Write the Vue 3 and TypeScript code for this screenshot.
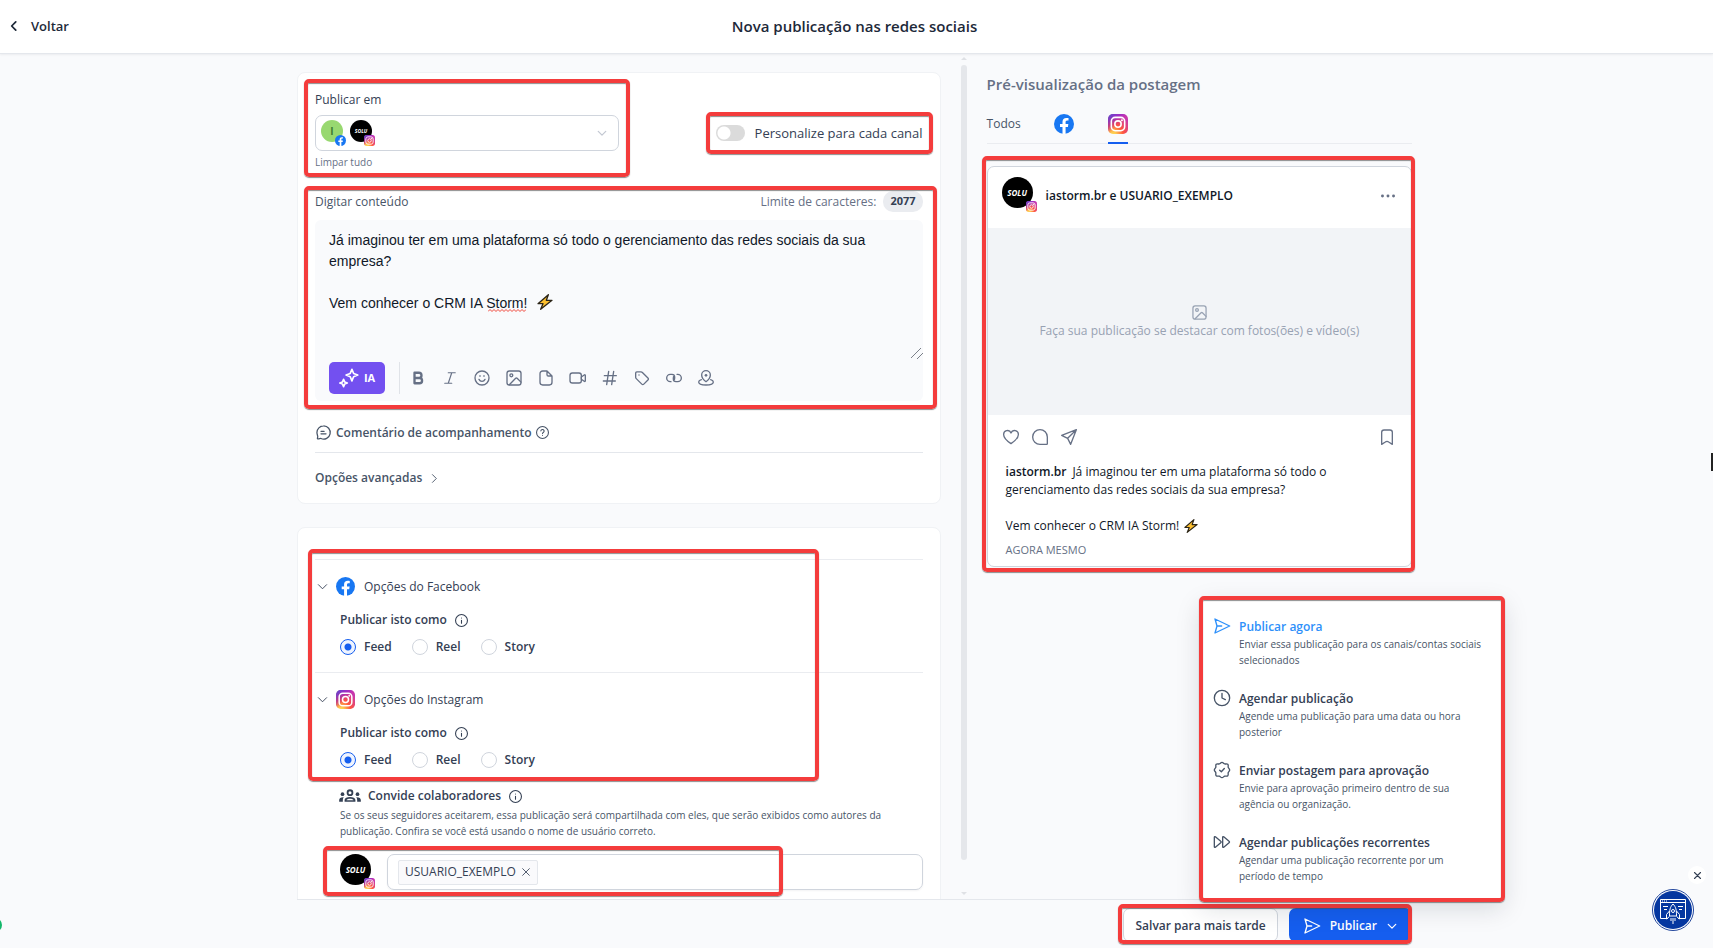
<script setup lang="ts">
import { h, ref, type FunctionalComponent } from 'vue'

const glyphs: Record<string, string> = {
  back: '<path d="M15 5l-7 7 7 7"/>',
  right: '<path d="M7.500 3.500L16 12l-8.500 8.500"/>',
  down: '<path d="M3 8l9 9 9-9"/>',
  close: '<path d="M4 4l16 16M20 4L4 20"/>',
  bold: '<path d="M6 3h7.500a4.500 4.500 0 0 1 0 9H6zM6 12h8.500a4.500 4.500 0 0 1 0 9H6z"/>',
  italic: '<path d="M9 3h12M3 21h12M15 3L9 21"/>',
  smile: '<circle cx="12" cy="12" r="10.500"/><path d="M7.500 14s1.500 3 4.500 3 4.500-3 4.500-3M9 8.500v1M15 8.500v1"/>',
  image: '<rect x="1.500" y="1.500" width="21" height="21" rx="3.500"/><circle cx="8" cy="8" r="2.200"/><path d="M5 22l9.500-9.500c.8-.8 1.400-.8 2.200 0l5.800 5.700"/>',
  file: '<path d="M13.500 1.500H7a4 4 0 0 0-4 4v13a4 4 0 0 0 4 4h10a4 4 0 0 0 4-4V9zM13.500 1.500V7a2 2 0 0 0 2 2H21"/>',
  video: '<rect x="0" y="4.500" width="17" height="15" rx="3.500"/><path d="M17 10.500l4.300-3c1-.7 1.700-.3 1.700.7v8c0 1-.7 1.400-1.700.7l-4.300-3z"/>',
  hash: '<path d="M3.500 8.500h18M2 16.500h18M10 2L7 22M17.500 2l-3 20"/>',
  tag: '<path d="M2.500 4.500v6.300c0 .9.300 1.500.9 2.100l8.300 8.300c1 1 2 1 3 0l6.200-6.200c1-1 1-2 0-3l-8.300-8.300c-.6-.6-1.200-.9-2.100-.9H4.200c-1 0-1.700.7-1.700 1.700z"/><path d="M7.500 7.500h.01"/>',
  link: '<path d="M7.500 17.500h-1a5.500 5.500 0 0 1 0-11H9a4 4 0 0 1 4 4V12a4 4 0 0 1-1.500 3.500M16.500 6.500h1a5.500 5.500 0 0 1 0 11H15a4 4 0 0 1-4-4V12a4 4 0 0 1 1.500-3.500"/>',
  place: '<path d="M12 17.500s-6.500-4.700-6.500-10a6.500 6.500 0 0 1 13 0c0 5.300-6.500 10-6.500 10z"/><path d="M12 8h.01" stroke-width="4"/><path d="M5 14.500c-2.400.7-4 1.800-4 3.500 0 2.500 4.900 4.500 11 4.500s11-2 11-4.500c0-1.700-1.600-2.800-4-3.500"/>',
  comment: '<path d="M12 1.500a10.500 10.500 0 1 1-4 20.100c-.7-.3-3.800.9-5.300.6-.8-.2-.6-1 .1-2.900.4-1-1.300-4.600-1.300-7.300A10.500 10.500 0 0 1 12 1.500zM8 10h5M8 14h8"/>',
  help: '<circle cx="12" cy="12" r="11"/><path d="M9 9a3 3 0 0 1 6 .8c0 2.200-3 2.200-3 4.200M12 17.500h.01"/>',
  info: '<circle cx="12" cy="12" r="11"/><path d="M12 11.500v5.500M12 7.500h.01"/>',
  heart: '<path d="M12 22C7 18.500 1 14 1 8.500A5.700 5.700 0 0 1 12 6a5.700 5.700 0 0 1 11 2.500C23 14 17 18.500 12 22z"/>',
  bubble: '<path d="M23 12v10c0 .6-.4 1-1 1H12a11 11 0 1 1 11-11z"/>',
  plane: '<path d="M23 1L1 9.500l9 4.500 4.500 9zM23 1L10 14"/>',
  bookmark: '<path d="M4 5a3.500 3.500 0 0 1 3.500-3.500h9A3.500 3.500 0 0 1 20 5v18l-5.500-3.500a4 4 0 0 0-5 0L4 23z"/>',
  send: '<path d="M1.500 1.500L23.500 12 1.500 22.500 4.500 12zM4.500 12h7"/>',
  clock: '<circle cx="12" cy="12" r="11.500"/><path d="M12 5V12l5 2.500"/>',
  approve: '<path d="M12 .5c1.900 0 2.500 2 4.100 2.400s3.300-.6 4.600.6.200 3 .6 4.500 2.200 2.100 2.200 4-1.800 2.500-2.200 4 .6 3.300-.6 4.600-3 .2-4.600.6-2.200 2.300-4.100 2.300-2.500-1.900-4.100-2.300-3.300.6-4.600-.6-.2-3-.6-4.600-2.200-2.100-2.200-4 1.800-2.500 2.200-4-.6-3.300.6-4.500 3-.2 4.600-.6S10.100.5 12 .5z"/><path d="M8.500 12.300l2.500 2.400 4.500-5"/>',
  forward: '<path d="M.5 5c0-1 .8-1.400 1.600-.8l8 6.800c.8.600.8 1.400 0 2l-8 6.800c-.8.600-1.600.2-1.600-.8zM13 5c0-1 .8-1.400 1.600-.8l8 6.800c.8.600.8 1.400 0 2l-8 6.800c-.8.600-1.600.2-1.600-.8z"/>',
  dots: '<g fill="currentColor" stroke="none"><circle cx="2.500" cy="12" r="2.500"/><circle cx="12" cy="12" r="2.500"/><circle cx="21.500" cy="12" r="2.500"/></g>',
  sparkle: '<path d="M15.500 1.500l2 5 5 2-5 2-2 5-2-5-5-2 5-2zM5.500 13.500l1.300 3.200 3.200 1.300-3.200 1.300-1.300 3.200-1.300-3.200L1 18l3.200-1.300z"/>',
  group: '<g fill="currentColor" stroke="none"><path fill-rule="evenodd" d="M12 4a4 4 0 1 1 0 8 4 4 0 0 1 0-8zm0 2.200a1.800 1.800 0 1 0 0 3.600 1.800 1.800 0 0 0 0-3.600zM5.500 19v-2.200c0-2.300 3-3.500 6.500-3.500s6.500 1.200 6.500 3.500V19zm2.300-2h8.400c-.3-.9-2-1.600-4.200-1.600s-3.900.7-4.200 1.600z"/><circle cx="3" cy="9.800" r="2.200"/><circle cx="21" cy="9.800" r="2.200"/><path d="M-1 19v-2c0-2.300 2-3.700 5.500-3.500-.8.900-1.100 2-1.100 3.300V19zM25 19v-2c0-2.300-2-3.700-5.500-3.500.8.900 1.100 2 1.100 3.300V19z"/></g>',
  bolt: '<path d="M17 1L1.500 14.500H9L5.500 23 22.500 9.500H14z" fill="#fdc02f" stroke="#2b2417" stroke-width="2"/>',
}

const Icon: FunctionalComponent<{ name: string; size?: number; weight?: number }> = (p) =>
  h('svg', {
    class: 'icon',
    viewBox: '0 0 24 24',
    width: p.size ?? 18,
    height: p.size ?? 18,
    fill: 'none',
    stroke: 'currentColor',
    'stroke-width': p.weight ?? 2,
    'stroke-linecap': 'round',
    'stroke-linejoin': 'round',
    overflow: 'visible',
    'aria-hidden': 'true',
    innerHTML: glyphs[p.name],
  })
Icon.props = ['name', 'size', 'weight']

const brandArt: Record<string, string> = {
  facebook:
    '<circle cx="12" cy="12" r="12" fill="#1877f2"/><path fill="#fff" d="M16.700 15.500l.5-3.500h-3.300V9.700c0-1 .5-1.900 2-1.900h1.500V4.900s-1.400-.2-2.700-.2c-2.700 0-4.500 1.600-4.500 4.600V12h-3v3.500h3V24h3.700v-8.500z"/>',
  instagram:
    '<rect width="24" height="24" rx="6" fill="url(#ig-base)"/><rect width="24" height="24" rx="6" fill="url(#ig-top)"/><g fill="none" stroke="#fff" stroke-width="1.900"><rect x="4" y="4" width="16" height="16" rx="4.600"/><circle cx="12" cy="12" r="3.800"/></g><circle cx="16.700" cy="7.400" r="1.200" fill="#fff"/>',
}

const Brand: FunctionalComponent<{ name: string; size: number }> = (p) =>
  h('svg', {
    class: 'brand',
    viewBox: '0 0 24 24',
    width: p.size,
    height: p.size,
    'aria-hidden': 'true',
    innerHTML: brandArt[p.name],
  })
Brand.props = ['name', 'size']

const content = ref(
  'Já imaginou ter em uma plataforma só todo o gerenciamento das redes sociais da sua empresa?\n\nVem conhecer o CRM IA Storm! ⚡',
)
const perChannel = ref(false)

const tools = [
  ['bold', 'Negrito'],
  ['italic', 'Itálico'],
  ['smile', 'Emoji'],
  ['image', 'Imagem'],
  ['file', 'Arquivo'],
  ['video', 'Vídeo'],
  ['hash', 'Hashtag'],
  ['tag', 'Etiqueta'],
  ['link', 'Link'],
  ['place', 'Localização'],
]

const networks = ref([
  { id: 'facebook', title: 'Opções do Facebook', kind: 'Feed' },
  { id: 'instagram', title: 'Opções do Instagram', kind: 'Feed' },
])
const kinds = ['Feed', 'Reel', 'Story']

const actions = [
  { icon: 'send', title: 'Publicar agora', text: 'Enviar essa publicação para os canais/contas sociais selecionados', active: true },
  { icon: 'clock', title: 'Agendar publicação', text: 'Agende uma publicação para uma data ou hora posterior' },
  { icon: 'approve', title: 'Enviar postagem para aprovação', text: 'Envie para aprovação primeiro dentro de sua agência ou organização.' },
  { icon: 'forward', title: 'Agendar publicações recorrentes', text: 'Agendar uma publicação recorrente por um período de tempo' },
]
</script>

<template>
  <div class="app">
    <svg class="defs" width="0" height="0" aria-hidden="true">
      <defs>
        <radialGradient id="ig-base" cx=".27" cy="1.05" r="1">
          <stop offset="0" stop-color="#fd5" />
          <stop offset=".15" stop-color="#fdc94f" />
          <stop offset=".5" stop-color="#ff543e" />
          <stop offset="1" stop-color="#c837ab" />
        </radialGradient>
        <linearGradient id="ig-top" x1="0" y1="0" x2=".5" y2=".5">
          <stop offset="0" stop-color="#3771c8" />
          <stop offset=".25" stop-color="#6040d0" stop-opacity=".8" />
          <stop offset="1" stop-color="#60f" stop-opacity="0" />
        </linearGradient>
      </defs>
    </svg>

    <header class="topbar">
      <button class="back" type="button"><Icon name="back" :size="14" :weight="3" />Voltar</button>
      <h1>Nova publicação nas redes sociais</h1>
    </header>

    <main class="main">
      <section class="composer">
        <div class="card">
          <div class="row-top">
            <div class="channels marked mark-channels">
              <span id="channels-label" class="label">Publicar em</span>
              <button class="picker" type="button" aria-labelledby="channels-label">
                <span class="avatar small green">I<Brand name="facebook" :size="11" /></span>
                <span class="avatar small black"><i>SOLU</i><Brand name="instagram" :size="11" /></span>
                <Icon class="picker-caret" name="down" :size="10" :weight="3" />
              </button>
              <button class="clear" type="button">Limpar tudo</button>
            </div>
            <label class="toggle marked mark-toggle">
              <input v-model="perChannel" type="checkbox" role="switch" />
              Personalize para cada canal
            </label>
          </div>

          <div class="editor marked mark-editor">
            <div class="editor-head">
              <label class="label soft" for="content">Digitar conteúdo</label>
              <span class="limit">Limite de caracteres: <b>2077</b></span>
            </div>
            <div class="panel">
              <div class="field">
                <textarea id="content" v-model="content" spellcheck="false"></textarea>
                <svg class="squiggle" viewBox="0 0 38 3" width="38" height="3" aria-hidden="true">
                  <path d="M0 2.500l2-2 2 2 2-2 2 2 2-2 2 2 2-2 2 2 2-2 2 2 2-2 2 2 2-2 2 2 2-2 2 2 2-2 2 2 2-2" fill="none" stroke="#f04438" />
                </svg>
                <span class="bolt"><Icon name="bolt" :size="16" /></span>
                <svg class="grip" viewBox="0 0 12 12" width="12" height="12" aria-hidden="true">
                  <path d="M0 11L10 1M6 12l6-6" fill="none" stroke="#7b8089" />
                </svg>
              </div>
              <div class="toolbar">
                <button class="ai" type="button"><Icon name="sparkle" :size="20" :weight="2" />IA</button>
                <div class="tools">
                  <button v-for="[name, label] in tools" :key="name" type="button" :aria-label="label">
                    <Icon :name="name" :size="name === 'bold' || name === 'italic' ? 14 : 16" :weight="name === 'bold' ? 4 : 2" />
                  </button>
                </div>
              </div>
            </div>
          </div>

          <button class="comment" type="button">
            <Icon name="comment" :size="15" />Comentário de acompanhamento<Icon name="help" :size="13" />
          </button>
          <button class="advanced" type="button">Opções avançadas<Icon name="right" :size="11" /></button>
        </div>

        <div class="card second">
          <div class="networks marked mark-networks">
            <section v-for="n in networks" :key="n.id" class="network">
              <button class="network-head" type="button">
                <Icon name="down" :size="11" /><Brand :name="n.id" :size="19" />{{ n.title }}
              </button>
              <fieldset>
                <legend>Publicar isto como <Icon name="info" :size="13" /></legend>
                <label v-for="k in kinds" :key="k">
                  <input v-model="n.kind" type="radio" :name="n.id" :value="k" />{{ k }}
                </label>
              </fieldset>
            </section>
          </div>
          <div class="invite">
            <h3><Icon name="group" :size="20" />Convide colaboradores<Icon name="info" :size="13" /></h3>
            <p>
              Se os seus seguidores aceitarem, essa publicação será compartilhada com eles, que serão exibidos como
              autores da publicação. Confira se você está usando o nome de usuário correto.
            </p>
            <div class="invite-row marked mark-invite">
              <span class="avatar black"><i>SOLU</i><Brand name="instagram" :size="11" /></span>
              <div class="people">
                <span class="chip">USUARIO_EXEMPLO
                  <button type="button" aria-label="Remover"><Icon name="close" :size="10" /></button>
                </span>
                <input type="text" aria-label="Convide colaboradores" />
              </div>
            </div>
          </div>
        </div>
      </section>

      <div class="scroll" aria-hidden="true"><span class="up"></span><span class="thumb"></span><span class="dn"></span></div>

      <section class="preview">
        <h2>Pré-visualização da postagem</h2>
        <nav class="tabs">
          <button type="button">Todos</button>
          <button type="button" aria-label="Facebook"><Brand name="facebook" :size="20" /></button>
          <button type="button" class="on" aria-label="Instagram"><Brand name="instagram" :size="20" /></button>
        </nav>
        <article class="post marked mark-post">
          <header>
            <span class="avatar black"><i>SOLU</i><Brand name="instagram" :size="11" /></span>
            <strong>iastorm.br e USUARIO_EXEMPLO</strong>
            <Icon class="push" name="dots" :size="14" />
          </header>
          <div class="media"><Icon name="image" :size="15" />Faça sua publicação se destacar com fotos(ões) e vídeo(s)</div>
          <div class="reactions">
            <Icon name="heart" :size="16" /><Icon name="bubble" :size="16" /><Icon name="plane" :size="16" />
            <Icon class="push" name="bookmark" :size="16" />
          </div>
          <div class="caption">
            <p><b>iastorm.br</b>Já imaginou ter em uma plataforma só todo o gerenciamento das redes sociais da sua empresa?</p>
            <p>Vem conhecer o CRM IA Storm! <Icon name="bolt" :size="14" /></p>
            <small>AGORA MESMO</small>
          </div>
        </article>
      </section>
    </main>

    <footer class="footer">
      <div class="footer-inner">
        <div class="submit marked mark-submit">
          <button class="save" type="button">Salvar para mais tarde</button>
          <button class="publish" type="button"><Icon name="send" :size="16" />Publicar<Icon name="down" :size="10" :weight="3" /></button>
        </div>
        <div class="menu marked mark-menu">
          <button v-for="a in actions" :key="a.title" type="button" :class="{ active: a.active }">
            <Icon :name="a.icon" :size="16" />
            <span><strong>{{ a.title }}</strong>{{ a.text }}</span>
          </button>
        </div>
      </div>
    </footer>

    <button class="widget-close" type="button" aria-label="Fechar"><Icon name="close" :size="9" :weight="3" /></button>
    <button class="widget" type="button" aria-label="Ajuda">
      <svg viewBox="0 0 44 44" width="44" height="44" fill="none" stroke="#fff" aria-hidden="true">
        <circle cx="22" cy="22" r="20.500" fill="#fff" stroke="#23479d" />
        <circle cx="22" cy="22" r="19" fill="#0537a0" stroke="none" />
        <path d="M17 30.500H9.500v-19h25v19H27M9.500 14.500h25M11 13h1M13 13h1M15 13h1M12 18.500h5M13 21.500h3M27 18.500h5M28 21.500h3" />
        <path d="M22 16c-3 3-3.500 6-3.500 12h7c0-6-.5-9-3.500-12zM18.500 23l-3 3.500V31l3-2.500M25.500 23l3 3.500V31l-3-2.500M20 30v3M22 30v6M24 30v3" fill="#0537a0" />
        <circle cx="22" cy="23" r="1.500" />
      </svg>
    </button>
    <span class="edge-dot"></span>
    <span class="edge-bar"></span>
  </div>
</template>

<style>
body {
  margin: 0;
}
</style>

<style scoped>
.app {
  position: relative;
  display: grid;
  grid-template-rows: 54px minmax(0, 1fr) 49px;
  height: 100vh;
  overflow: hidden;
  background: #f9fafc;
  color: #344054;
  font: 12px/18px "Open Sans", "Noto Sans", sans-serif;
}
.app :deep(.icon),
.app :deep(.brand) {
  flex: none;
}
.defs {
  position: absolute;
}
button {
  display: flex;
  align-items: center;
  padding: 0;
  border: 0;
  background: none;
  color: inherit;
  font: inherit;
  text-align: left;
}
h1, h2, h3, p {
  margin: 0;
}
.marked {
  position: relative;
}
.marked::after {
  content: "";
  position: absolute;
  border: 4px solid #f43c3c;
  border-radius: 5px;
  box-shadow: 0 1px 1px #555a, inset 0 1px 1px #555a;
  pointer-events: none;
}
.push {
  margin-left: auto;
}

.topbar {
  z-index: 1;
  display: grid;
  grid-template-columns: 1fr auto 1fr;
  align-items: center;
  padding: 0 11px 2px 7px;
  border-bottom: 1px solid #e4e7ec;
  background: #fff;
  box-shadow: 0 1px 2px #1018280f;
  box-sizing: border-box;
  color: #1d2939;
}
.back {
  gap: 10px;
  font-size: 13px;
  font-weight: 600;
}
h1 {
  font-size: 15px;
  font-weight: 600;
}

.main,
.footer-inner {
  width: 100%;
  max-width: 1119px;
  box-sizing: border-box;
  margin: 0 auto;
  padding-right: 4px;
}
.main {
  display: grid;
  grid-template-columns: minmax(0, 643fr) 6px minmax(0, 425fr);
  column-gap: 20px;
}
.composer {
  min-height: 0;
  padding-top: 18px;
  overflow: hidden;
}
.card {
  padding: 17px 17px 0;
  border: 1px solid #f0f2f5;
  border-radius: 8px;
  background: #fff;
}
.card.second {
  margin-top: 23px;
  padding-top: 31px;
}
.row-top {
  display: flex;
  justify-content: space-between;
}
.channels {
  display: flex;
  flex-direction: column;
  align-items: stretch;
  width: 50%;
}
.label {
  padding-top: 1px;
}
.mark-channels::after {
  inset: -11px -11px -6px -11px;
}
.picker {
  gap: 7px;
  height: 36px;
  margin: 6px 0 2px;
  padding: 0 11px 0 5px;
  border: 1px solid #d0d5dd;
  border-radius: 7px;
  box-sizing: border-box;
}
.picker-caret {
  margin-left: auto;
  color: #c3c8d2;
}
.avatar {
  position: relative;
  display: flex;
  flex: none;
  align-items: center;
  justify-content: center;
  width: 31px;
  height: 31px;
  border-radius: 50%;
  color: #fff;
  font-size: 8px;
}
.avatar i {
  font-weight: 700;
}
.avatar.small {
  width: 22px;
  height: 22px;
  margin-bottom: 4px;
  font-size: 5px;
}
.avatar :deep(.brand) {
  position: absolute;
  right: -4px;
  bottom: -4px;
}
.avatar.small :deep(.brand) {
  right: -3px;
}
.black {
  background: #000;
}
.avatar.green {
  background: #98d870;
  color: #3e7a30;
  font-size: 10px;
  font-weight: 700;
}
.clear {
  color: #667085;
  font-size: 10px;
}
.toggle {
  display: flex;
  align-items: center;
  align-self: flex-start;
  gap: 10px;
  margin-top: 34px;
  font-size: 13px;
}
.toggle input {
  appearance: none;
  width: 29px;
  height: 16px;
  margin: 0;
  border-radius: 8px;
  background: radial-gradient(circle at 8px 8px, #fff 6px, #0000 7px), #dbdbdb;
}
.mark-toggle::after {
  inset: -12px -10px;
}
.editor {
  margin-top: 20px;
}
.mark-editor::after {
  inset: -5px -14px -8px -11px;
}
.editor-head {
  display: flex;
  align-items: center;
  justify-content: space-between;
  height: 21px;
}
.soft {
  color: #475467;
}
.limit {
  display: flex;
  align-items: center;
  gap: 7px;
  color: #667085;
}
.limit b {
  padding: 1px 7px 2px;
  border-radius: 10px;
  background: #eaecf0;
  color: #344054;
  font-size: 11px;
}
.panel {
  margin-top: 8px;
  padding-bottom: 7px;
  border-radius: 6px;
  background: #f9fafc;
}
.field {
  position: relative;
  height: 142px;
}
textarea {
  display: block;
  width: 100%;
  height: 140px;
  padding: 10px 14px;
  border: 0;
  box-sizing: border-box;
  background: none;
  color: #101828;
  font: 14px/21px "Liberation Sans", Arial, sans-serif;
  outline: 0;
  resize: none;
  overflow: hidden;
}
.squiggle {
  position: absolute;
  left: 173px;
  top: 89px;
}
.bolt {
  position: absolute;
  left: 216px;
  top: 73px;
  display: flex;
  padding: 1px 4px 4px 6px;
  background: #f9fafc;
}
.grip {
  position: absolute;
  right: 0;
  bottom: 3px;
}
.toolbar {
  display: flex;
  align-items: center;
  height: 32px;
  padding-left: 14px;
}
.ai {
  justify-content: center;
  gap: 5px;
  width: 56px;
  height: 32px;
  border-radius: 5px;
  background: #7350f0;
  color: #fff;
  font-size: 11px;
  font-weight: 700;
}
.tools {
  display: flex;
  align-items: center;
  height: 32px;
  margin-left: 14px;
  padding-left: 2px;
  border-left: 1px solid #e0e3e8;
  color: #667085;
}
.tools button {
  justify-content: center;
  width: 32px;
  height: 32px;
}
.comment,
.advanced {
  width: 100%;
  color: #475467;
  font-weight: 600;
}
.comment {
  gap: 5px;
  height: 52px;
  padding: 12px 0 0 1px;
  border-bottom: 1px solid #e4e7ec;
}
.advanced {
  gap: 7px;
  height: 50px;
}

.mark-networks::after {
  inset: -10px 104px 4px -7px;
}
.network {
  height: 112px;
  border-top: 1px solid #eaecf0;
}
.network-head {
  gap: 8px;
  padding: 17px 0 0 2px;
}
.network-head :deep(.brand) {
  margin: 0 1px 0 0;
}
fieldset {
  display: flex;
  gap: 20px;
  margin: 15px 0 0 25px;
  padding: 0;
  border: 0;
  font-weight: 600;
}
legend {
  display: flex;
  align-items: center;
  gap: 8px;
  padding: 0;
  margin-bottom: 9px;
}
fieldset label {
  display: flex;
  align-items: center;
  gap: 8px;
}
input[type="radio"] {
  appearance: none;
  width: 16px;
  height: 16px;
  margin: 0;
  border: 1px solid #d0d5dd;
  border-radius: 50%;
}
input[type="radio"]:checked {
  border-color: #155eef;
  background: radial-gradient(circle, #155eef 3px, #eff4ff 4px);
}
.invite {
  padding: 1px 0 40px 25px;
}
.invite h3 {
  display: flex;
  align-items: center;
  gap: 8px;
  font-size: 12px;
  font-weight: 600;
}
.invite p {
  color: #475467;
  font-size: 10px;
  line-height: 16px;
  margin-top: 1px;
}
.invite-row {
  display: flex;
  align-items: flex-start;
  gap: 16px;
  margin-top: 15px;
}
.mark-invite::after {
  inset: -8px 140px -6px -17px;
}
.people {
  display: flex;
  flex: 1;
  align-items: center;
  min-width: 0;
  height: 36px;
  padding: 0 10px;
  border: 1px solid #d0d5dd;
  border-radius: 7px;
  box-shadow: 0 1px 2px #1018280d;
  box-sizing: border-box;
}
.people input {
  flex: 1;
  min-width: 0;
  border: 0;
  background: none;
  outline: 0;
}
.chip {
  display: flex;
  align-items: center;
  gap: 5px;
  height: 23px;
  padding: 0 6px;
  border: 1px solid #e4e7ec;
  border-radius: 2px;
  background: #fafafc;
}

.scroll {
  display: flex;
  flex-direction: column;
  align-items: center;
  padding: 3px 0 4px;
}
.thumb {
  flex: 1;
  width: 6px;
  margin: 5px 0 32px;
  border-radius: 3px;
  background: #e5e7eb;
}
.up,
.dn {
  border: 3px solid transparent;
}
.up {
  border-top: 0;
  border-bottom-color: #dfe1e5;
}
.dn {
  border-bottom: 0;
  border-top-color: #dfe1e5;
}

.preview {
  padding-top: 19px;
}
h2 {
  color: #667085;
  font-size: 15px;
  font-weight: 600;
  line-height: 22px;
}
.tabs {
  display: flex;
  gap: 33px;
  height: 38px;
  margin: 10px 0 22px;
  border-bottom: 1px solid #eaecf0;
}
.tabs button {
  height: 39px;
  box-sizing: border-box;
  border-bottom: 2px solid transparent;
  color: #475467;
}
.tabs .on {
  border-color: #155eef;
}
.tabs button + button + button {
  margin-left: 1px;
}
.post {
  border: 1px solid #d0d5dd;
  border-radius: 7px;
  background: #fff;
}
.mark-post::after {
  inset: -11px -4px -6px -6px;
}
.post header {
  display: flex;
  align-items: flex-start;
  gap: 13px;
  height: 61px;
  padding: 10px 16px 0 14px;
  box-sizing: border-box;
  color: #101828;
}
.post strong {
  margin-top: 10px;
  font-weight: 600;
}
.post header .push {
  margin-top: 12px;
  color: #667085;
}
.media {
  display: flex;
  flex-direction: column;
  align-items: center;
  justify-content: center;
  gap: 2px;
  height: 187px;
  padding-top: 2px;
  box-sizing: border-box;
  background: #f2f4f7;
  color: #98a2b3;
}
.reactions {
  display: flex;
  gap: 13px;
  padding: 14px 16px 0 15px;
  color: #667085;
}
.caption {
  padding: 18px 60px 7px 18px;
  color: #101828;
}
.caption b {
  margin-right: 6px;
  font-weight: 600;
}
.caption p {
  margin-bottom: 18px;
}
.caption p + p {
  margin-bottom: 6px;
}
.caption :deep(.icon) {
  margin-left: 2px;
  vertical-align: -3px;
}
.caption small {
  display: block;
  color: #667085;
  font-size: 11px;
}

.footer-inner {
  position: relative;
  display: flex;
  justify-content: flex-end;
  height: 49px;
  padding-top: 8px;
  border-top: 1px solid #e4e7ec;
}
.submit {
  display: flex;
  gap: 11px;
  height: 34px;
}
.mark-submit::after {
  inset: -4px 0 -2px -5px;
}
.save,
.publish {
  height: 34px;
  box-sizing: border-box;
  border-radius: 7px;
  font-weight: 600;
}
.save {
  padding: 2px 11px 0;
  border: 1px solid #d0d5dd;
  background: #fff;
}
.publish {
  gap: 10px;
  padding: 2px 15px 0 15px;
  background: #155eef;
  color: #fff;
}
.menu {
  position: absolute;
  right: -87px;
  bottom: 48px;
  display: flex;
  flex-direction: column;
  gap: 22px;
  width: 302px;
  box-sizing: border-box;
  padding: 20px 21px 16px 13px;
  background: #fff;
  box-shadow: 0 8px 24px #10182826;
}
.mark-menu::after {
  inset: -2px;
}
.menu button {
  align-items: flex-start;
  gap: 9px;
  color: #475467;
  font-size: 10px;
  line-height: 16px;
}
.menu strong {
  display: block;
  color: #344054;
  font-size: 12px;
  font-weight: 600;
  line-height: 18px;
}
.menu .active > :deep(.icon),
.menu .active strong {
  color: #2e90fa;
}

.widget,
.widget-close {
  position: absolute;
  justify-content: center;
}
.widget {
  right: 18px;
  bottom: 16px;
}
.widget-close {
  right: 7px;
  bottom: 64px;
  width: 18px;
  height: 18px;
  border-radius: 50%;
  background: #fff;
}
.edge-dot {
  position: absolute;
  left: -12px;
  bottom: 16px;
  width: 14px;
  height: 14px;
  border-radius: 50%;
  background: #12b76a;
}
.edge-bar {
  position: absolute;
  right: 0;
  top: 453px;
  width: 2px;
  height: 18px;
  background: #222;
}
</style>
